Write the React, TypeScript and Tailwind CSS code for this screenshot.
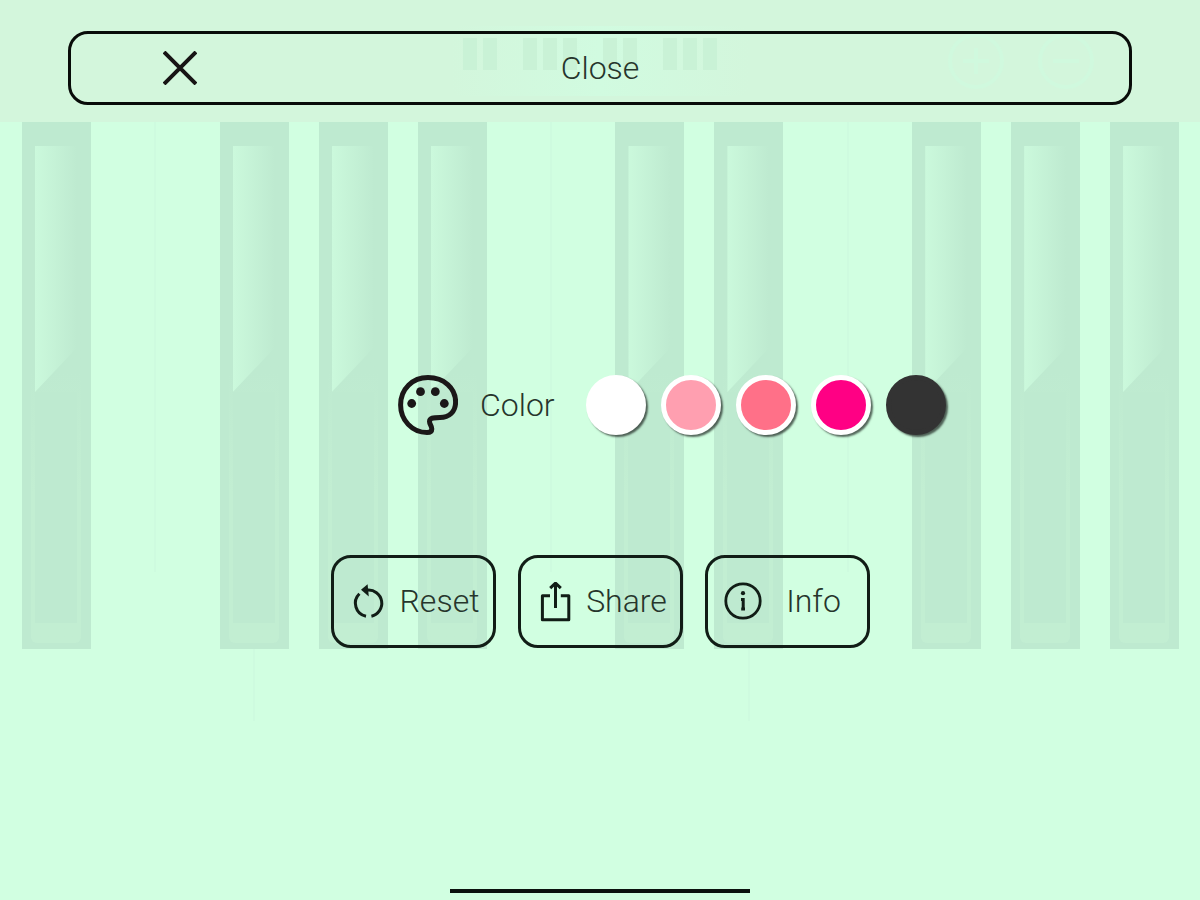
import type { ReactNode } from 'react'

const BLACK_KEYS = [true, false, true, true, true, false, true, true, false, true, true, true]
const MINI_KEYS = [true, true, false, true, true, true, false, true, true, false, true, true, true]
const LOWER_SEAMS = [2, 7]

const SWATCHES = [
  { name: 'White', className: 'bg-white border-white' },
  { name: 'Light pink', className: 'bg-[#ff9fb0] border-white' },
  { name: 'Pink', className: 'bg-[#ff7088] border-white' },
  { name: 'Magenta', className: 'bg-[#ff0084] border-white' },
  { name: 'Black', className: 'bg-[#333333] border-[#333333]' },
]

function PaletteIcon() {
  return (
    <svg viewBox="0 0 60 60" className="size-[60px]" fill="none" stroke="#1b1718" strokeWidth="5" strokeLinejoin="round" aria-hidden="true">
      <path d="M29 57.5C14 57.5 2.6 45 2.6 30C2.6 14 14.5 2.6 30 2.6C46 2.6 57.6 13 57.6 27C57.6 37 51 42.5 42 42.5C35 42.5 31.5 43 31.5 46.5C31.5 49.5 33.8 50.5 33.8 54C33.8 56.5 32 57.5 29 57.5Z" />
      <g fill="#1b1718" stroke="none">
        <circle cx="22.5" cy="16.7" r="4.4" />
        <circle cx="37.3" cy="16.7" r="4.4" />
        <circle cx="13.7" cy="28.5" r="4.4" />
        <circle cx="46.3" cy="28.5" r="4.4" />
      </g>
    </svg>
  )
}

function ResetIcon() {
  return (
    <svg viewBox="0 0 40 40" className="size-10" fill="none" stroke="#111d16" strokeWidth="3" aria-hidden="true">
      <path d="M10.4 11.8A13.2 13.2 0 0 0 17 34.2" />
      <path d="M22.4 34.2A13.2 13.2 0 0 0 18 8.2" />
      <path d="M12 7.8L18.6 2.2L19.8 14.6Z" fill="#111d16" stroke="none" />
    </svg>
  )
}

function ShareIcon() {
  return (
    <svg viewBox="0 0 40 40" className="size-10" fill="none" stroke="#111d16" strokeWidth="3" strokeLinejoin="round" aria-hidden="true">
      <path d="M14 13.8H6.4V37.8H32.8V13.8H24.8" />
      <path d="M19.5 26V1.6M14.2 6.2L19.5 1.2L24.8 6.2" />
    </svg>
  )
}

function InfoIcon() {
  return (
    <svg viewBox="0 0 40 40" className="size-10" fill="none" stroke="#111d16" strokeWidth="2.8" aria-hidden="true">
      <circle cx="20" cy="19" r="17.2" />
      <path d="M18 17.6H20.2V28M18.2 27H22" strokeWidth="3" />
      <circle cx="20" cy="11.2" r="2.1" fill="#111d16" stroke="none" />
    </svg>
  )
}

function BlackKey() {
  return (
    <div className="h-[527px] bg-[#beead0] pt-6 pb-1.5 pl-[9px] pr-[10px]">
      <div className="flex h-full flex-col justify-between rounded-b-md bg-linear-to-b from-[#beead0] from-45% to-[#c2eed2] to-70% px-1">
        <div className="h-[246px] bg-linear-to-r from-[#cbf9dc] to-[#beead0] [clip-path:polygon(0_0,100%_0,100%_82%,0_100%)]" />
        <div className="mb-5 flex-1 bg-[#beead0]" />
      </div>
    </div>
  )
}

function Piano() {
  return (
    <div className="absolute inset-0 flex flex-col overflow-hidden" aria-hidden="true">
      <div className="grid h-[122px] shrink-0 grid-cols-[1fr_auto_1fr] items-center bg-[#d3f6dc]">
        <div />
        <div className="h-[70px] w-[300px] rounded-xl bg-linear-to-r from-[#d3f6dc] via-[#d1fbe0] to-[#d3f6dc] pt-3 pl-[13px]">
          <div className="grid w-[254px] grid-cols-13 gap-1.5">
            {MINI_KEYS.map((black, i) => (
              <div key={i} className={black ? 'h-8 bg-[#c9f2d6]' : 'h-8'} />
            ))}
          </div>
        </div>
        <div className="flex justify-end gap-8 pr-[105px]">
          <svg viewBox="0 0 58 58" className="size-[58px]" fill="none" stroke="#d0f9de" strokeWidth="4">
            <circle cx="29" cy="29" r="26" />
            <path d="M29 16V42M16 29H42" />
          </svg>
          <svg viewBox="0 0 58 58" className="size-[58px]" fill="none" stroke="#d0f9de" strokeWidth="4">
            <circle cx="29" cy="29" r="26" />
            <path d="M16 29H42" />
          </svg>
        </div>
      </div>
      <div className="ml-[22px] mr-[21px] grid grid-cols-12 gap-x-[30px]">
        {BLACK_KEYS.map((black, i) =>
          black ? <BlackKey key={i} /> : <div key={i} className="mx-auto h-[450px] w-0.5 bg-[#cefbdf]" />
        )}
        {BLACK_KEYS.map((_, i) => (
          <div key={i} className={LOWER_SEAMS.includes(i) ? 'mx-auto h-[72px] w-0.5 bg-[#cefbdf]' : ''} />
        ))}
      </div>
    </div>
  )
}

function ActionButton({ icon, label }: { icon: ReactNode; label: string }) {
  return (
    <button
      type="button"
      className="flex h-[93px] w-[165px] items-center rounded-[20px] border-3 border-[#111d16] pr-0.5 pl-[15px]"
    >
      <span className="shrink-0">{icon}</span>
      <span className="flex-1 pb-0.5 text-center">{label}</span>
    </button>
  )
}

export default function App() {
  return (
    <div className="relative min-h-screen bg-[#d1ffe1] font-['Roboto',sans-serif] text-[32px] leading-10 font-light text-[#26352c]">
      <Piano />
      <main className="relative flex min-h-screen flex-col">
        <div className="px-[68px] pt-[31px]">
          <button
            type="button"
            className="grid h-[74px] w-full grid-cols-[1fr_auto_1fr] items-center rounded-[20px] border-3 border-[#080c09]"
          >
            <svg viewBox="0 0 34 34" className="ml-[92px] size-[34px]" stroke="#181415" strokeWidth="4" aria-hidden="true">
              <path d="M1 1L33 33M33 1L1 33" />
            </svg>
            <span>Close</span>
          </button>
        </div>

        <div className="mt-[270px] flex items-center justify-center pl-[144px]">
          <PaletteIcon />
          <span id="color-label" className="w-32 pl-[22px]">Color</span>
          <div role="group" aria-labelledby="color-label" className="flex gap-[15px]">
            {SWATCHES.map((s) => (
              <button
                key={s.name}
                type="button"
                aria-label={s.name}
                className={`size-[60px] rounded-full border-5 shadow-[2px_2px_2px_rgba(0,0,0,0.6)] ${s.className}`}
              />
            ))}
          </div>
        </div>

        <div className="mt-[120px] flex justify-center gap-[22px]">
          <ActionButton icon={<ResetIcon />} label="Reset" />
          <ActionButton icon={<ShareIcon />} label="Share" />
          <ActionButton icon={<InfoIcon />} label="Info" />
        </div>

        <div className="mx-auto mt-auto mb-[7px] h-1 w-1/4 bg-[#0b120e]" />
      </main>
    </div>
  )
}
